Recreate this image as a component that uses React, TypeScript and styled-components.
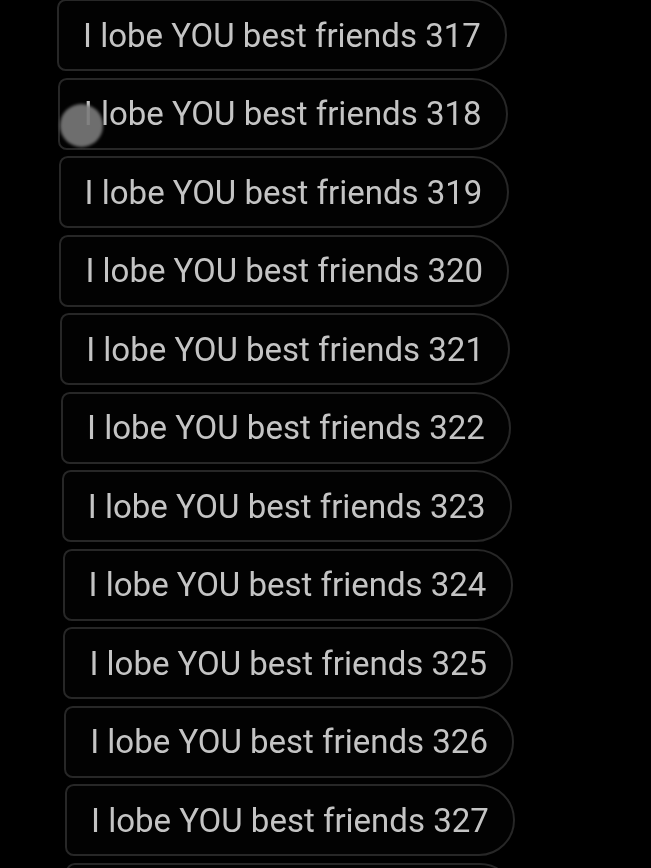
import React from "react";
import styled, { createGlobalStyle } from "styled-components";

const Global = createGlobalStyle`
  html, body { margin: 0; padding: 0; background: #000; }
  body { width: 651px; height: 868px; overflow: hidden; font-family: Roboto, "Noto Sans", sans-serif; }
`;

const Screen = styled.main`
  position: relative;
  width: 651px;
  height: 868px;
  background: #000;
  overflow: hidden;
`;

const List = styled.ul`
  list-style: none;
  margin: -1px 0 0 0;
  padding: 0 0 0 57px;
  display: flex;
  flex-direction: column;
  gap: 6.5px;
`;

const Bubble = styled.li<{ $shift: number }>`
  box-sizing: border-box;
  flex: none;
  width: 450px;
  height: 72px;
  margin-left: ${(p) => p.$shift}px;
  display: flex;
  align-items: center;
  padding-left: 24px;
  border: 2px solid #272727;
  border-radius: 9px 37px 37px 9px;
  background: #020202;
  color: #c4c4c4;
  font-family: Roboto, "Noto Sans", sans-serif;
  font-size: 33px;
  letter-spacing: 0;
  white-space: nowrap;
  filter: blur(0.4px);
`;

const Touch = styled.div`
  position: absolute;
  left: 60px;
  top: 104px;
  width: 43px;
  height: 43px;
  border-radius: 50%;
  background: rgba(122, 122, 122, 0.9);
  filter: blur(1.5px);
`;

const numbers = Array.from({ length: 11 }, (_, i) => 317 + i);

export default function App() {
  return (
    <Screen>
      <Global />
      <List>
        {numbers.map((n, i) => (
          <Bubble key={n} $shift={i * 0.8}>
            I lobe YOU best friends {n}
          </Bubble>
        ))}
        <Bubble key="next" $shift={numbers.length * 0.8} aria-hidden />
      </List>
      <Touch />
    </Screen>
  );
}
